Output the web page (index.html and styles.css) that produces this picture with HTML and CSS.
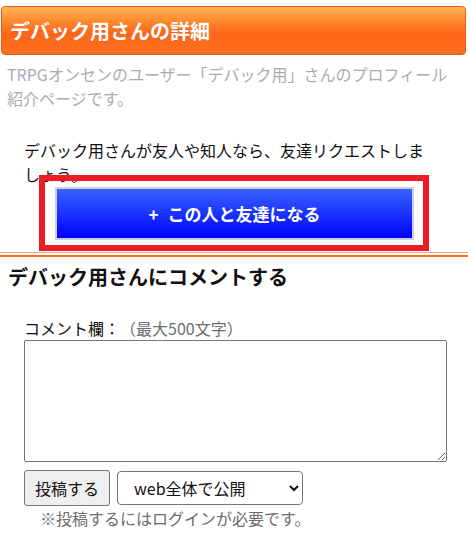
FILE: index.html
```html
<!DOCTYPE html>
<html lang="ja">
<head>
  <meta charset="UTF-8" />
  <meta name="viewport" content="width=device-width, initial-scale=1.0" />
  <title>デバック用さんの詳細 - TRPGオンセン</title>
  <link rel="stylesheet" href="styles.css">
</head>
<body>
  <header class="page-title">
    <h1>デバック用さんの詳細</h1>
  </header>
  <p class="lead">TRPGオンセンのユーザー「デバック用」さんのプロフィール紹介ページです。</p>

  <section class="friend">
    <p>デバック用さんが友人や知人なら、友達リクエストしましょう。</p>
    <div class="friend-action">
      <button class="friend-btn" type="button"><span class="plus">+</span>この人と友達になる</button>
      <span class="highlight"></span>
    </div>
  </section>

  <section class="comment">
    <h2>デバック用さんにコメントする</h2>
    <form class="comment-form">
      <label for="comment">コメント欄：<span class="limit">（最大500文字）</span></label>
      <textarea id="comment" maxlength="500"></textarea>
      <div class="post-row">
        <button type="button" class="post-btn">投稿する</button>
        <select class="scope">
          <option>web全体で公開</option>
          <option>友達のみ公開</option>
        </select>
      </div>
      <p class="note">※投稿するにはログインが必要です。</p>
    </form>
  </section>
</body>
</html>
```

FILE: styles.css
```css
body {
  font-family: 'Noto Sans CJK JP', 'Noto Sans', sans-serif;
  margin: 0;
  padding: 0;
  background-color: #fff;
  color: #111;
  font-size: 16px;
  text-spacing-trim: space-all;
}
.page-title {
  margin: 6px 2px 0 1px;
  height: 47px;
  display: flex;
  align-items: center;
  padding-left: 8px;
  border: 1px solid #e35d16;
  border-radius: 4px;
  background: linear-gradient(to bottom, #ffb454 0%, #ff8a2e 30%, #ff661a 55%, #ff701f 100%);
}
.page-title h1 {
  margin: 0;
  color: #fff;
  font-size: 20px;
  font-weight: bold;
  line-height: 24px;
  text-shadow: 0 0 1px rgba(160, 60, 0, 0.4);
}
.lead {
  margin: 7px 8px 0 7px;
  color: #aaabb2;
  line-height: 24px;
}
.friend {
  margin: 28px 36px 0 24px;
}
.friend p {
  margin: 0;
  line-height: 24px;
}
.friend-action {
  position: relative;
  width: 359px;
  margin: 1px 0 12px 31px;
}
.friend-btn {
  display: block;
  width: 359px;
  height: 53px;
  border: 2px solid #ccd0e6;
  background: linear-gradient(to bottom, #3a62ff 0%, #1a33ff 50%, #0000ff 100%);
  color: #fff;
  font-family: inherit;
  font-size: 17px;
  font-weight: bold;
  cursor: pointer;
}
.friend-btn .plus {
  margin-right: 9px;
}
.highlight {
  position: absolute;
  left: -16px;
  right: -15px;
  top: -12px;
  bottom: -11px;
  border: 6px solid #ed1c24;
  pointer-events: none;
}
.comment {
  border-top: 1px solid #f8a47e;
  padding-top: 2px;
}
.comment h2 {
  border-top: 2px solid #ff6a1e;
  margin: 0;
  padding: 4px 0 0 8px;
  font-size: 20px;
  font-weight: bold;
  line-height: 32px;
}
.comment-form {
  margin: 23px 21px 0 24px;
}
.comment-form label {
  display: block;
  line-height: 24px;
}
.limit {
  color: #6d6d6d;
}
.comment-form textarea {
  display: block;
  box-sizing: border-box;
  width: 423px;
  height: 122px;
  margin: 0;
  border: 1px solid #767676;
  border-radius: 2px;
  font-family: inherit;
}
.post-row {
  display: flex;
  align-items: center;
  gap: 7px;
  margin-top: 8px;
}
.post-btn {
  height: 36px;
  padding: 0 10px;
  border: 1px solid #767676;
  border-radius: 3px;
  background-color: #efefef;
  color: #111;
  font-family: inherit;
  font-size: 16px;
  line-height: 20px;
}
.scope {
  width: 186px;
  height: 34px;
  padding: 0 8px 0 12px;
  border: 1px solid #767676;
  border-radius: 4px;
  background-color: #fff;
  color: #111;
  font-family: inherit;
  font-size: 16px;
}
.note {
  margin: 0 0 0 16px;
  color: #6d6d6d;
  line-height: 24px;
}
```
